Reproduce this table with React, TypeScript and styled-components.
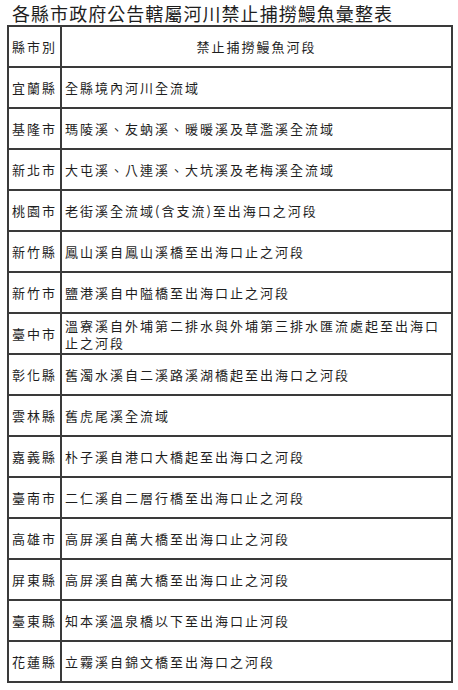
import React from 'react';
import styled, { createGlobalStyle } from 'styled-components';

const GlobalStyle = createGlobalStyle`
    html, body {
        margin: 0;
        padding: 0;
        background: #ffffff;
    }
    body {
        font-family: 'Noto Sans CJK TC', 'Noto Sans CJK SC', sans-serif;
        color: #222;
    }
`;

const rows: [string, string][] = [
    ['宜蘭縣', '全縣境內河川全流域'],
    ['基隆市', '瑪陵溪、友蚋溪、暖暖溪及草濫溪全流域'],
    ['新北市', '大屯溪、八連溪、大坑溪及老梅溪全流域'],
    ['桃園市', '老街溪全流域(含支流)至出海口之河段'],
    ['新竹縣', '鳳山溪自鳳山溪橋至出海口止之河段'],
    ['新竹市', '鹽港溪自中隘橋至出海口止之河段'],
    ['臺中市', '溫寮溪自外埔第二排水與外埔第三排水匯流處起至出海口止之河段'],
    ['彰化縣', '舊濁水溪自二溪路溪湖橋起至出海口之河段'],
    ['雲林縣', '舊虎尾溪全流域'],
    ['嘉義縣', '朴子溪自港口大橋起至出海口之河段'],
    ['臺南市', '二仁溪自二層行橋至出海口止之河段'],
    ['高雄市', '高屏溪自萬大橋至出海口止之河段'],
    ['屏東縣', '高屏溪自萬大橋至出海口止之河段'],
    ['臺東縣', '知本溪溫泉橋以下至出海口止河段'],
    ['花蓮縣', '立霧溪自錦文橋至出海口之河段'],
];

const Page = styled.div`
    width: 458px;
    padding: 2px 0 0 7px;
    box-sizing: border-box;
`;

const Title = styled.h1`
    margin: 0 0 1px 5px;
    font-size: 18px;
    font-weight: 400;
    letter-spacing: 1.05px;
    line-height: 22px;
    color: #1e1e1e;
    white-space: nowrap;
`;

const Table = styled.table`
    width: 446px;
    border-collapse: collapse;
    border: 2px solid #3a3a3a;
    table-layout: fixed;
`;

const Row = styled.tr`
    height: 41px;
`;

const Cell = styled.td<{ $center?: boolean; $narrow?: boolean }>`
    border: 2px solid #3a3a3a;
    padding: 0 0 0 ${(p) => (p.$center ? '0' : '3px')};
    width: ${(p) => (p.$narrow ? '51px' : 'auto')};
    text-align: ${(p) => (p.$center ? 'center' : 'left')};
    font-size: 13px;
    letter-spacing: 2px;
    line-height: 17px;
    color: #1e1e1e;
    vertical-align: middle;
`;

const HeadCell = styled(Cell).attrs({ as: 'th' })`
    font-weight: 400;
`;

export default function App() {
    return (
        <Page>
            <GlobalStyle />
            <Title>各縣市政府公告轄屬河川禁止捕撈鰻魚彙整表</Title>
            <Table>
                <thead>
                    <Row>
                        <HeadCell $center $narrow>
                            縣市別
                        </HeadCell>
                        <HeadCell $center>禁止捕撈鰻魚河段</HeadCell>
                    </Row>
                </thead>
                <tbody>
                    {rows.map(([city, river]) => (
                        <Row key={city}>
                            <Cell $center $narrow>
                                {city}
                            </Cell>
                            <Cell>{river}</Cell>
                        </Row>
                    ))}
                </tbody>
            </Table>
        </Page>
    );
}
